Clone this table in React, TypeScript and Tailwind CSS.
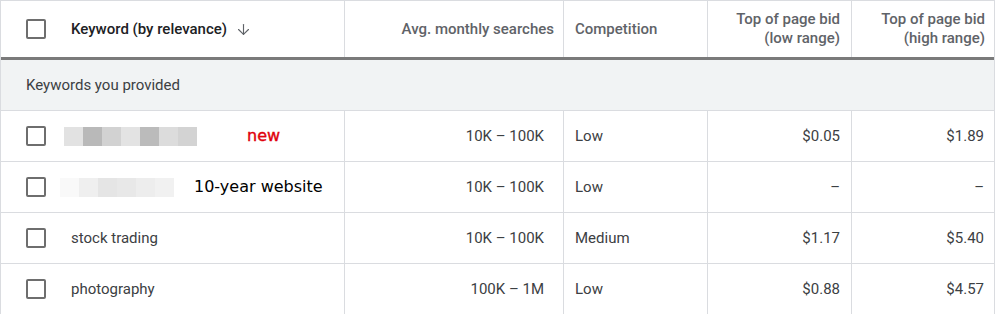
import React from "react";
import { ArrowDown } from "lucide-react";

const cols = "grid grid-cols-[344px_219px_144px_144px_143px]";
const cell = "flex items-center border-r border-[#dadce0] px-[11px]";

const Checkbox = () => (
    <div className="w-[20px] h-[20px] rounded-[2px] border-[2.5px] border-[#6e6e6e] bg-white shrink-0" />
);

const Blur = ({ shades }: { shades: string[] }) => (
    <div className="flex h-[19px]">
        {shades.map((s, i) => (
            <div key={i} className="w-[19px] h-full" style={{ background: s }} />
        ))}
    </div>
);

type Row = {
    keyword: React.ReactNode;
    searches: string;
    competition: string;
    low: string;
    high: string;
};

const rows: Row[] = [
    {
        keyword: (
            <div className="flex items-center">
                <div className="ml-[-7px]">
                    <Blur shades={["#e2e2e2", "#b9b9b9", "#d2d2d2", "#e3e3e3", "#bbbbbb", "#dcdcdc", "#d3d3d3"]} />
                </div>
                <span className="ml-[50px] text-[16px] text-[#e0000b] font-['DejaVu_Sans',sans-serif] [-webkit-text-stroke:0.4px_#e0000b]">new</span>
            </div>
        ),
        searches: "10K – 100K",
        competition: "Low",
        low: "$0.05",
        high: "$1.89"
    },
    {
        keyword: (
            <div className="flex items-center">
                <div className="ml-[-11px]">
                    <Blur shades={["#f9f9f9", "#efefef", "#e5e5e5", "#e8e8e8", "#ededed", "#f1f1f1"]} />
                </div>
                <span className="ml-[20px] text-[16px] text-black font-['DejaVu_Sans',sans-serif]">10-year website</span>
            </div>
        ),
        searches: "10K – 100K",
        competition: "Low",
        low: "–",
        high: "–"
    },
    { keyword: "stock trading", searches: "10K – 100K", competition: "Medium", low: "$1.17", high: "$5.40" },
    { keyword: "photography", searches: "100K – 1M", competition: "Low", low: "$0.88", high: "$4.57" }
];

const App = () => {
    return (
        <div className="w-[996px] h-[314px] overflow-hidden bg-white font-['Roboto',sans-serif] text-[15px]">
            <div className="w-[995px] border-t border-l border-r border-[#dadce0]">
                {/* header */}
                <div className={`${cols} h-[59px] border-b-[3px] border-[#7a7a7a]`}>
                    <div className={`${cell} pl-[25px]`}>
                        <Checkbox />
                        <span className="ml-[25px] font-medium text-[#202124]">Keyword (by relevance)</span>
                        <ArrowDown className="ml-[8px] text-[#5f6368]" size={17} strokeWidth={1.6} />
                    </div>
                    <div className={`${cell} justify-end pr-[9px] font-medium text-[#5f6368]`}>Avg. monthly searches</div>
                    <div className={`${cell} font-medium text-[#5f6368]`}>Competition</div>
                    <div className={`${cell} justify-end text-right font-medium text-[#5f6368] leading-[19px]`}>
                        Top of page bid
                        <br />
                        (low range)
                    </div>
                    <div className="flex items-center px-[10px] justify-end text-right font-medium text-[#5f6368] leading-[19px]">
                        Top of page bid
                        <br />
                        (high range)
                    </div>
                </div>
                {/* section */}
                <div className="h-[51px] bg-[#f1f3f4] border-b border-[#dadce0] flex items-center px-[25px] text-[#3c4043]">
                    Keywords you provided
                </div>
                {rows.map((r, i) => (
                    <div key={i} className={`${cols} h-[51px] border-b border-[#dadce0] text-[#3c4043]`}>
                        <div className={`${cell} pl-[25px]`}>
                            <Checkbox />
                            <div className="ml-[25px]">{r.keyword}</div>
                        </div>
                        <div className={`${cell} justify-end pr-[19px]`}>{r.searches}</div>
                        <div className={cell}>{r.competition}</div>
                        <div className={`${cell} justify-end`}>{r.low}</div>
                        <div className="flex items-center justify-end px-[11px]">{r.high}</div>
                    </div>
                ))}
            </div>
        </div>
    );
};

export default App;
